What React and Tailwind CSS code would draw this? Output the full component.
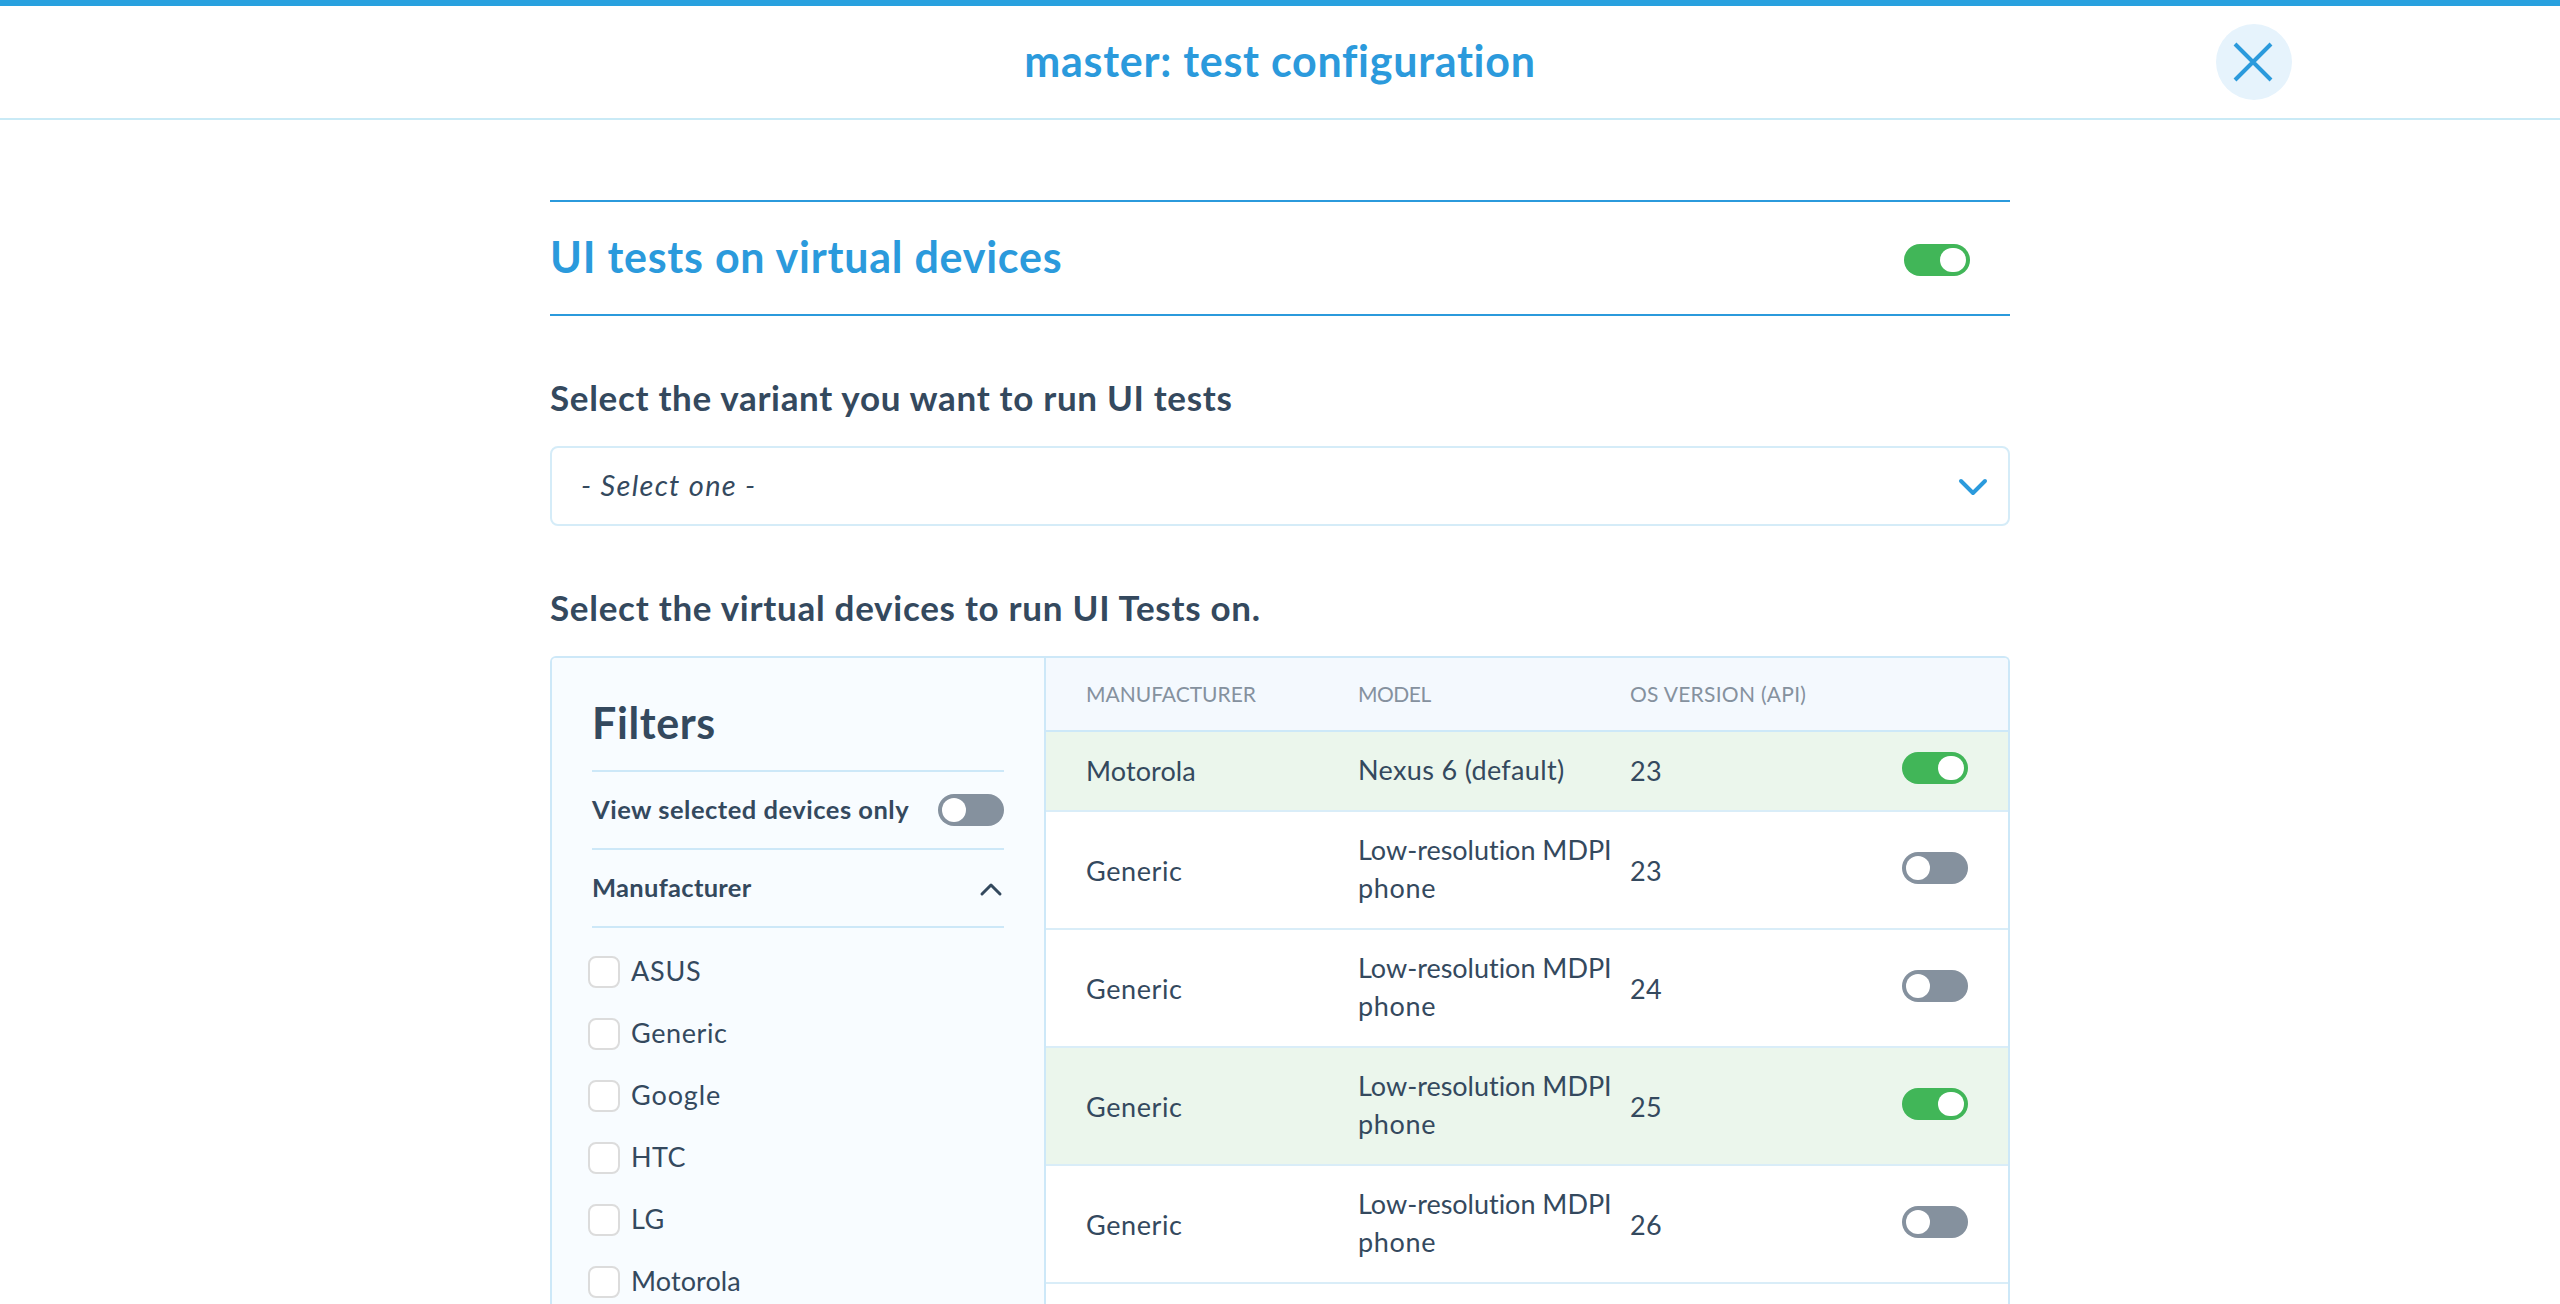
import React from 'react';

const manufacturers = [
  { name: 'ASUS', tracking: 'tracking-[0.74px]' },
  { name: 'Generic', tracking: 'tracking-[0.6px]' },
  { name: 'Google', tracking: 'tracking-[0.9px]' },
  { name: 'HTC', tracking: 'tracking-[0.4px]' },
  { name: 'LG', tracking: 'tracking-[0.6px]' },
  { name: 'Motorola', tracking: 'tracking-[0.1px]' },
];

const devices = [
  { maker: 'Motorola', model: ['Nexus 6 (default)'], api: '23', on: true },
  { maker: 'Generic', model: ['Low-resolution MDPI', 'phone'], api: '23', on: false },
  { maker: 'Generic', model: ['Low-resolution MDPI', 'phone'], api: '24', on: false },
  { maker: 'Generic', model: ['Low-resolution MDPI', 'phone'], api: '25', on: true },
  { maker: 'Generic', model: ['Low-resolution MDPI', 'phone'], api: '26', on: false },
];

const textTracking = {
  Motorola: 'tracking-[0.1px]',
  Generic: 'tracking-[0.6px]',
  'Nexus 6 (default)': 'tracking-[0.34px]',
  'Low-resolution MDPI': 'tracking-[-0.02px]',
  phone: 'tracking-[0.7px]',
};

function Toggle({ on }) {
  return (
    <button
      type="button"
      role="switch"
      aria-checked={on}
      className={
        on
          ? 'flex h-8 w-[66px] shrink-0 items-center justify-end rounded-full bg-[#41b658] px-1'
          : 'flex h-8 w-[66px] shrink-0 items-center justify-start rounded-full bg-[#85919e] px-1'
      }
    >
      <span className={on ? 'h-6 w-[26px] rounded-full bg-white' : 'size-6 rounded-full bg-white'} />
    </button>
  );
}

function Header() {
  return (
    <header className="grid h-[120px] shrink-0 grid-cols-[1fr_auto_1fr] items-center border-t-6 border-b-2 border-t-[#28a1df] border-b-[#c9eaf6]">
      <span />
      <h1 className="pb-[3px] text-[43px] leading-[50px] font-bold tracking-[0.72px] text-[#2b9adc]">
        master: test configuration
      </h1>
      <button
        type="button"
        aria-label="Close"
        className="mr-[268px] flex size-[76px] items-center justify-center justify-self-end rounded-full bg-[#e6f3fc]"
      >
        <svg className="mr-0.5 mb-px" width="40" height="40" viewBox="0 0 40 40" fill="none" stroke="#2b9adc" strokeWidth="4">
          <path d="M2 2L38 38M38 2L2 38" />
        </svg>
      </button>
    </header>
  );
}

function Filters() {
  return (
    <aside className="w-[494px] shrink-0 border-r-2 border-[#cde8f8] bg-[#f8fcff] px-10">
      <h3 className="border-b-2 border-[#cde8f8] pt-10 pb-[22px] text-[43px] leading-[50px] font-bold tracking-[0.6px]">
        Filters
      </h3>
      <div className="flex h-[78px] items-center justify-between border-b-2 border-[#cde8f8] pb-1">
        <span className="pt-0.5 text-[25.5px] font-bold tracking-[0.5px]">View selected devices only</span>
        <div className="mt-1">
          <Toggle on={false} />
        </div>
      </div>
      <div className="flex h-[78px] items-center justify-between border-b-2 border-[#cde8f8] pr-px pb-1">
        <span className="pt-0.5 text-[25.5px] font-bold tracking-[0.3px]">Manufacturer</span>
        <svg
          className="mt-1.5"
          width="24"
          height="16"
          viewBox="0 0 24 16"
          fill="none"
          stroke="#34495e"
          strokeWidth="3"
          strokeLinecap="round"
          strokeLinejoin="round"
        >
          <path d="M3 13L12 4L21 13" />
        </svg>
      </div>
      <ul className="mt-7 -ml-1 flex flex-col gap-[30px]">
        {manufacturers.map((m) => (
          <li key={m.name} className="flex h-8 items-center gap-[11px]">
            <span className="size-8 rounded-lg border-2 border-[#dcdcdc] bg-white" />
            <span className={`pb-[3px] text-[27px] leading-8 ${m.tracking}`}>{m.name}</span>
          </li>
        ))}
      </ul>
    </aside>
  );
}

function DeviceRow({ device }) {
  const tall = device.model.length > 1;
  const nudge = tall ? 'pt-px' : 'pb-px';
  return (
    <div
      className={
        device.on
          ? 'grid grid-cols-[272px_272px_272px_auto] items-center border-b-2 border-[#d9edf8] bg-[#ebf6ec] pl-10'
          : 'grid grid-cols-[272px_272px_272px_auto] items-center border-b-2 border-[#d9edf8] bg-white pl-10'
      }
    >
      <span className={`${nudge} ${textTracking[device.maker]}`}>{device.maker}</span>
      <div className="pt-[19px] pb-[21px]">
        {device.model.map((line) => (
          <p key={line} className={`whitespace-nowrap ${textTracking[line]}`}>
            {line}
          </p>
        ))}
      </div>
      <span className={`${nudge} tracking-[0.34px]`}>{device.api}</span>
      <div className={tall ? 'pb-1' : 'pb-1.5'}>
        <Toggle on={device.on} />
      </div>
    </div>
  );
}

function DeviceTable() {
  return (
    <section className="flex-1 text-[27px] leading-[38px]">
      <div className="grid h-[74px] grid-cols-[272px_272px_272px_auto] items-center border-b-2 border-[#cde8f8] bg-[#f4f9fe] pl-10 text-[21px] text-[#85919e]">
        <span>MANUFACTURER</span>
        <span className="tracking-[-0.5px]">MODEL</span>
        <span className="tracking-[0.28px]">OS VERSION (API)</span>
      </div>
      {devices.map((d, i) => (
        <DeviceRow key={i} device={d} />
      ))}
    </section>
  );
}

export default function App() {
  return (
    <div className="flex h-screen flex-col overflow-hidden bg-white font-['Lato',sans-serif] text-[#34495e]">
      <Header />
      <main className="mx-auto mt-20 flex min-h-0 w-[1460px] flex-1 flex-col">
        <div className="flex h-[116px] shrink-0 items-center justify-between border-y-2 border-[#2b9adc] pr-10 pb-1">
          <h2 className="pt-0.5 text-[43px] leading-[50px] font-bold tracking-[0.75px] text-[#2b9adc]">
            UI tests on virtual devices
          </h2>
          <div className="mt-2">
            <Toggle on />
          </div>
        </div>
        <h3 className="mt-[61px] text-[35px] leading-10 font-bold tracking-[0.68px]">
          Select the variant you want to run UI tests
        </h3>
        <div className="mt-[29px] flex h-20 shrink-0 items-center justify-between rounded-lg border-2 border-[#d5ecf8] pr-[19px] pb-0.5 pl-[29px]">
          <span className="text-[29px] tracking-[1.3px] italic">- Select one -</span>
          <svg
            className="mt-1"
            width="32"
            height="20"
            viewBox="0 0 32 20"
            fill="none"
            stroke="#2b9adc"
            strokeWidth="4"
            strokeLinecap="round"
            strokeLinejoin="round"
          >
            <path d="M4 4L16 16L28 4" />
          </svg>
        </div>
        <h3 className="mt-[61px] text-[35px] leading-10 font-bold tracking-[0.72px]">
          Select the virtual devices to run UI Tests on.
        </h3>
        <div className="mt-[29px] flex min-h-0 flex-1 overflow-hidden rounded-t-md border-x-2 border-t-2 border-[#cde8f8]">
          <Filters />
          <DeviceTable />
        </div>
      </main>
    </div>
  );
}
